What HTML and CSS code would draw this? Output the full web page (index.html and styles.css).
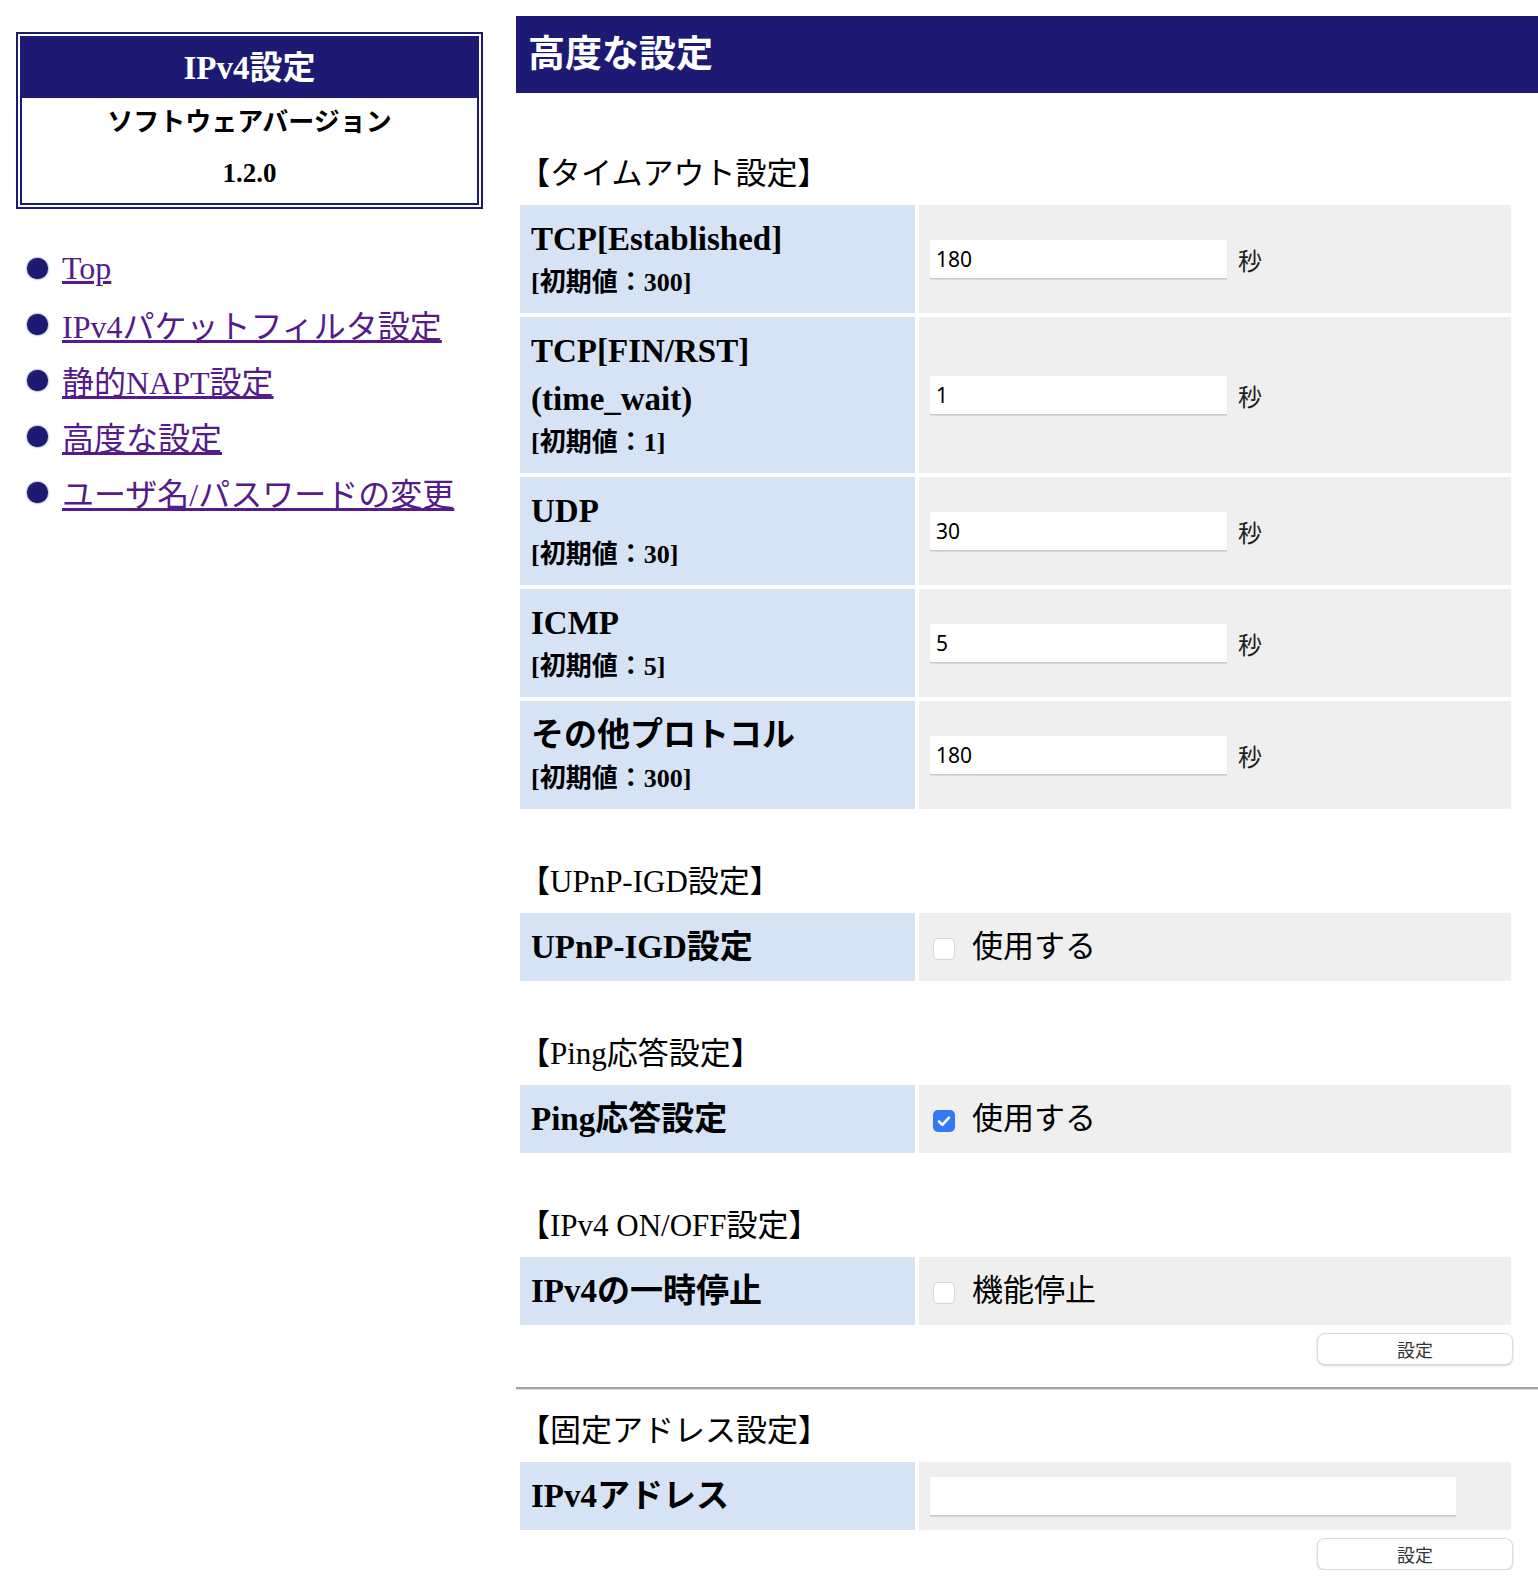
FILE: index.html
```html
<!DOCTYPE html>
<html lang="ja">
<head>
    <meta charset="UTF-8">
    <meta name="viewport" content="width=device-width, initial-scale=1.0">
    <title>高度な設定</title>
    <link rel="stylesheet" href="styles.css">
</head>
<body>
  <div class="page">

    <div class="side">
      <div class="side-box">
        <div class="side-title">IPv4設定</div>
        <div class="side-row">ソフトウェアバージョン</div>
        <div class="side-row version">1.2.0</div>
      </div>
      <ul class="menu">
        <li><span class="dot"></span><a href="#">Top</a></li>
        <li><span class="dot"></span><a href="#">IPv4パケットフィルタ設定</a></li>
        <li><span class="dot"></span><a href="#">静的NAPT設定</a></li>
        <li><span class="dot"></span><a href="#">高度な設定</a></li>
        <li><span class="dot"></span><a href="#">ユーザ名/パスワードの変更</a></li>
      </ul>
    </div>

    <div class="main">
      <h1 class="main-title">高度な設定</h1>

      <form>
        <div class="section-title first">【タイムアウト設定】</div>
        <table class="setting">
          <tr>
            <th><div class="label">TCP[Established]</div><div class="sub">[初期値：300]</div></th>
            <td><input type="text" class="num" value="180"><span class="unit">秒</span></td>
          </tr>
          <tr>
            <th><div class="label">TCP[FIN/RST]<br>(time_wait)</div><div class="sub">[初期値：1]</div></th>
            <td><input type="text" class="num" value="1"><span class="unit">秒</span></td>
          </tr>
          <tr>
            <th><div class="label">UDP</div><div class="sub">[初期値：30]</div></th>
            <td><input type="text" class="num" value="30"><span class="unit">秒</span></td>
          </tr>
          <tr>
            <th><div class="label">ICMP</div><div class="sub">[初期値：5]</div></th>
            <td><input type="text" class="num" value="5"><span class="unit">秒</span></td>
          </tr>
          <tr>
            <th><div class="label">その他プロトコル</div><div class="sub">[初期値：300]</div></th>
            <td><input type="text" class="num" value="180"><span class="unit">秒</span></td>
          </tr>
        </table>

        <div class="section-title">【UPnP-IGD設定】</div>
        <table class="setting">
          <tr>
            <th><div class="label">UPnP-IGD設定</div></th>
            <td>
              <label class="check"><input type="checkbox"><span class="box"><svg viewBox="0 0 22 22" width="22" height="22"><path d="M6 11.5l3.3 3.3L16 7.6" fill="none" stroke="#fff" stroke-width="2.6" stroke-linecap="round" stroke-linejoin="round"/></svg></span>使用する</label>
            </td>
          </tr>
        </table>

        <div class="section-title">【Ping応答設定】</div>
        <table class="setting">
          <tr>
            <th><div class="label">Ping応答設定</div></th>
            <td>
              <label class="check"><input type="checkbox" checked><span class="box"><svg viewBox="0 0 22 22" width="22" height="22"><path d="M6 11.5l3.3 3.3L16 7.6" fill="none" stroke="#fff" stroke-width="2.6" stroke-linecap="round" stroke-linejoin="round"/></svg></span>使用する</label>
            </td>
          </tr>
        </table>

        <div class="section-title">【IPv4 ON/OFF設定】</div>
        <table class="setting">
          <tr>
            <th><div class="label">IPv4の一時停止</div></th>
            <td>
              <label class="check"><input type="checkbox"><span class="box"><svg viewBox="0 0 22 22" width="22" height="22"><path d="M6 11.5l3.3 3.3L16 7.6" fill="none" stroke="#fff" stroke-width="2.6" stroke-linecap="round" stroke-linejoin="round"/></svg></span>機能停止</label>
            </td>
          </tr>
        </table>
        <div class="actions"><button type="button" class="set-btn">設定</button></div>
      </form>

      <hr class="divider">

      <form>
        <div class="section-title after-hr">【固定アドレス設定】</div>
        <table class="setting">
          <tr>
            <th><div class="label">IPv4アドレス</div></th>
            <td><input type="text" class="addr" value=""></td>
          </tr>
        </table>
        <div class="actions"><button type="button" class="set-btn">設定</button></div>
      </form>
    </div>

  </div>
</body>
</html>
```

FILE: styles.css
```css
body {
  margin: 0;
  background: #fff;
  color: #000;
  font-family: "Liberation Serif", "Noto Sans CJK JP", serif;
}

.page {
  display: flex;
  align-items: flex-start;
  padding: 16px 0 0 16px;
}

/* left column */
.side {
  width: 467px;
  flex-shrink: 0;
  margin-top: 16px;
}

.side-box {
  border: 6px double #1c1a73;
  text-align: center;
  font-weight: bold;
}

.side-title {
  background: #1c1a73;
  color: #fff;
  height: 60px;
  line-height: 60px;
  font-size: 33px;
}

.side-row {
  height: 50px;
  line-height: 50px;
  font-size: 26px;
}

.side-row.version {
  height: 55px;
  font-size: 27px;
}

.menu {
  list-style: none;
  margin: 31px 0 0;
  padding: 0;
}

.menu li {
  display: flex;
  align-items: center;
  height: 56px;
  font-size: 32px;
}

.dot {
  width: 21px;
  height: 21px;
  border-radius: 50%;
  background: #1c1a73;
  box-shadow: 0 0 2px #1c1a73;
  margin: 0 14px 0 11px;
  flex-shrink: 0;
}

.menu a {
  color: #551a8b;
  text-decoration: underline;
}

/* right column */
.main {
  flex: 1;
  margin-left: 33px;
  min-width: 0;
}

.main-title {
  margin: 0;
  height: 77px;
  line-height: 77px;
  padding-left: 12px;
  background: #1c1a73;
  color: #fff;
  font-size: 37px;
  font-weight: bold;
}

.section-title {
  margin: 45px 0 3px 3px;
  font-size: 31px;
  line-height: 48px;
}

.section-title.first {
  margin-top: 57px;
}

.section-title.after-hr {
  margin-top: 17px;
}

.setting {
  width: 999px;
  border-spacing: 4px;
}

.setting th {
  width: 395px;
  box-sizing: border-box;
  padding: 10px 11px;
  background: #d6e3f5;
  text-align: left;
  vertical-align: middle;
  font-weight: bold;
}

.setting td {
  padding: 0 11px;
  background: #efefef;
  vertical-align: middle;
}

.label {
  font-size: 33px;
  line-height: 48px;
}

.sub {
  font-size: 26px;
  line-height: 40px;
}

.num, .addr {
  height: 39px;
  box-sizing: border-box;
  padding: 0 6px;
  border: none;
  border-bottom: 1px solid #c6c6c6;
  box-shadow: 0 1px 1px rgba(0, 0, 0, 0.08);
  background: #fff;
  font-family: "Noto Sans", "Noto Sans CJK JP", sans-serif;
  font-size: 21px;
  color: #000;
  vertical-align: middle;
}

.num {
  width: 297px;
}

.addr {
  width: 526px;
}

.unit {
  margin-left: 11px;
  font-family: "Noto Sans CJK JP", sans-serif;
  font-size: 24px;
  vertical-align: middle;
  color: #222;
}

.check {
  display: flex;
  align-items: center;
  font-size: 31px;
  line-height: 48px;
}

.check input {
  display: none;
}

.box {
  width: 22px;
  height: 22px;
  box-sizing: border-box;
  margin: 4px 17px 0 3px;
  border: 1px solid #d4d4d4;
  border-radius: 5px;
  background: #fff;
  display: flex;
}

.box svg {
  display: none;
}

.check input:checked + .box {
  border: none;
  background: #3478f6;
}

.check input:checked + .box svg {
  display: block;
}

.actions {
  width: 999px;
  text-align: right;
  padding-top: 4px;
  box-sizing: border-box;
  padding-right: 2px;
}

.set-btn {
  width: 196px;
  height: 32px;
  background: #fff;
  border: 1px solid #dcdcdc;
  border-radius: 8px;
  box-shadow: 0 1px 2px rgba(0, 0, 0, 0.18);
  font-family: "Noto Sans CJK JP", sans-serif;
  font-size: 18px;
  color: #333;
  cursor: pointer;
}

.divider {
  margin: 22px 0 0;
  border: none;
  border-top: 2px solid #a4a4a4;
  border-bottom: 1px solid #dedede;
}
```
